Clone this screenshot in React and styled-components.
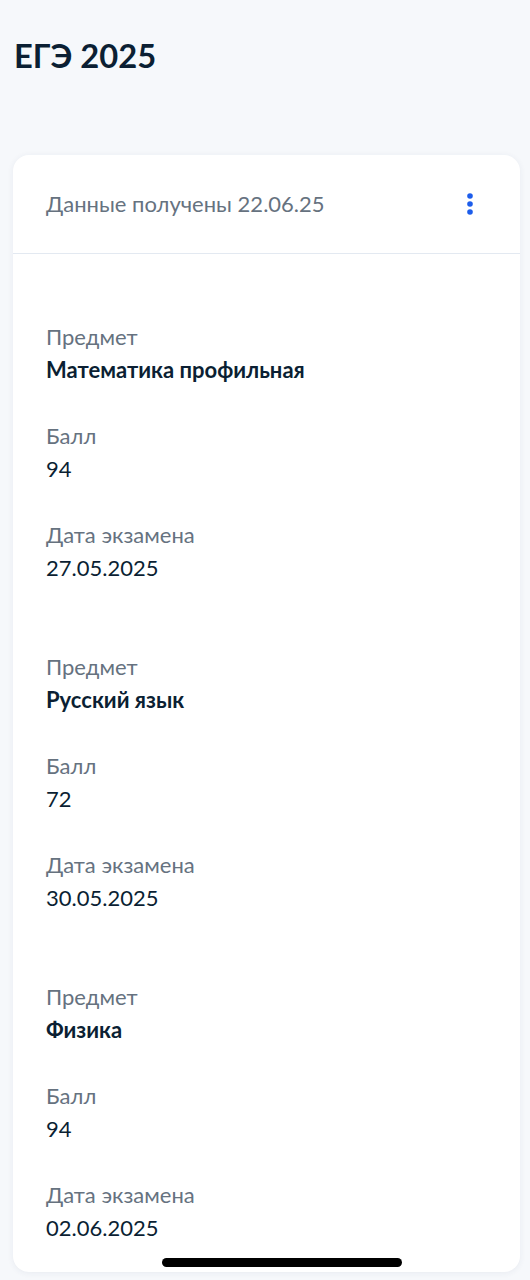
import styled, { createGlobalStyle } from 'styled-components';

const GlobalStyle = createGlobalStyle`
    html, body {
        margin: 0;
        padding: 0;
        background: #f6f8fb;
        font-family: Lato, "Noto Sans", sans-serif;
        -webkit-font-smoothing: antialiased;
    }
`;

const Page = styled.div`
    padding: 36px 10px 8px 13px;
    min-height: 1280px;
    box-sizing: border-box;
`;

const Title = styled.h1`
    margin: 0 0 79px 1px;
    font-size: 32.7px;
    line-height: 40px;
    font-weight: 700;
    color: #0b1f33;
`;

const Card = styled.section`
    background: #fff;
    border-radius: 16px;
    box-shadow: 0 1px 6px rgba(40, 60, 100, 0.07);
    padding-bottom: 28px;
`;

const CardHeader = styled.div`
    display: flex;
    align-items: center;
    justify-content: space-between;
    height: 98px;
    padding: 0 46px 0 33px;
    border-bottom: 1px solid #e3e9f1;
`;

const Received = styled.span`
    font-size: 22px;
    color: #66727f;
    margin-top: -2px;
`;

const MoreButton = styled.button`
    border: 0;
    background: none;
    padding: 0;
    display: flex;
    cursor: pointer;
`;

const Group = styled.div`
    display: flex;
    flex-direction: column;
    gap: 33px;
    padding: 66px 33px 0;
`;

const Field = styled.div`
    display: flex;
    flex-direction: column;
`;

const Label = styled.span`
    font-size: 22px;
    line-height: 33px;
    color: #66727f;
`;

const Value = styled.span`
    font-size: 22px;
    line-height: 33px;
    color: #0b1f33;
    font-weight: ${(p) => (p.$bold ? 700 : 400)};
`;

const HomeIndicator = styled.div`
    position: fixed;
    left: 162px;
    top: 1258px;
    width: 240px;
    height: 9px;
    border-radius: 5px;
    background: #000;
`;

const exams = [
    { subject: 'Математика профильная', score: '94', date: '27.05.2025' },
    { subject: 'Русский язык', score: '72', date: '30.05.2025' },
    { subject: 'Физика', score: '94', date: '02.06.2025' }
];

function DotsIcon() {
    return (
        <svg width="8" height="24" viewBox="0 0 8 24">
            <circle cx="4" cy="4" r="2.8" fill="#1d5deb" />
            <circle cx="4" cy="12" r="2.8" fill="#1d5deb" />
            <circle cx="4" cy="20" r="2.8" fill="#1d5deb" />
        </svg>
    );
}

export default function App() {
    return (
        <>
            <GlobalStyle />
            <Page>
                <Title>ЕГЭ 2025</Title>
                <Card>
                    <CardHeader>
                        <Received>Данные получены 22.06.25</Received>
                        <MoreButton aria-label="Ещё">
                            <DotsIcon />
                        </MoreButton>
                    </CardHeader>
                    {exams.map((exam) => (
                        <Group key={exam.subject}>
                            <Field>
                                <Label>Предмет</Label>
                                <Value $bold>{exam.subject}</Value>
                            </Field>
                            <Field>
                                <Label>Балл</Label>
                                <Value>{exam.score}</Value>
                            </Field>
                            <Field>
                                <Label>Дата экзамена</Label>
                                <Value>{exam.date}</Value>
                            </Field>
                        </Group>
                    ))}
                </Card>
            </Page>
            <HomeIndicator />
        </>
    );
}
